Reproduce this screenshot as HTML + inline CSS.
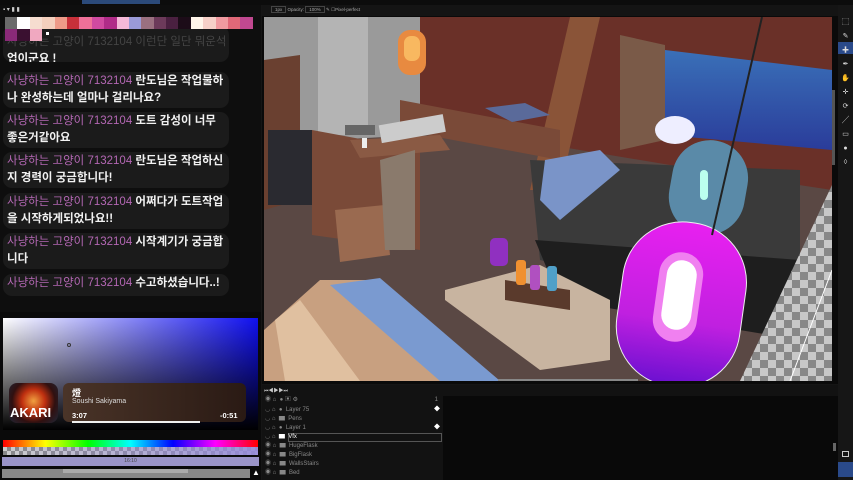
<!DOCTYPE html>
<html><head><meta charset="utf-8"><style>
*{margin:0;padding:0;box-sizing:border-box}
body{width:853px;height:480px;overflow:hidden;background:#151515;position:relative;font-family:"Liberation Sans","Noto Sans CJK KR",sans-serif}
.a{position:absolute}
.bub{position:absolute;left:3px;width:226px;background:#1b1b1b;border-radius:9px;color:#f2f2f2;font-size:11.5px;line-height:16.5px;padding:1px 4px;font-weight:bold}
.bub b{color:#b467b4;font-weight:normal}
.lay{position:absolute;left:262px;width:180px;height:9px;font-size:6px;color:#888;line-height:9px}
.pal{display:flex}.pal i{width:12.4px;height:12px;display:block}
</style></head><body>
<div class="a" style="left:0;top:0;width:853px;height:5px;background:#0c0c0c"></div>
<div class="a" style="left:82px;top:0;width:78px;height:4px;background:#2b4a7a"></div>
<!-- left panel -->
<div class="a" style="left:0;top:5px;width:261px;height:475px;background:#0e0e0e"></div>
<div class="bub" style="top:26px;height:36px;padding-top:8px;overflow:hidden"><div style="color:#444;font-weight:normal;white-space:nowrap;overflow:hidden">사냥하는 고양이 7132104 이런단 일단 뭐운석</div>업이군요 !</div>
<div class="a" style="left:3px;top:6px;font-size:6px;color:#ccc">▪ ▾ ▮ ▮</div>
<div class="a pal" style="left:5px;top:17px">
<i style="background:#6a6a6a"></i><i style="background:#fff"></i><i style="background:#f6ddd0"></i><i style="background:#f4cfbd"></i><i style="background:#ee9a88"></i><i style="background:#c8303a"></i><i style="background:#ee7098"></i><i style="background:#d04aa0"></i><i style="background:#b02c88"></i><i style="background:#f4b8d8"></i><i style="background:#9a9ad8"></i><i style="background:#9a7080"></i><i style="background:#6c3a5a"></i><i style="background:#4a2040"></i><i style="background:#1c0c18"></i><i style="background:#fff5ea"></i><i style="background:#f6d0c8"></i><i style="background:#f09aa0"></i><i style="background:#e06878"></i><i style="background:#c04890"></i></div>
<div class="a pal" style="left:5px;top:29px"><i style="background:#8a2a78"></i><i style="background:#3a1030"></i><i style="background:#f0a8c0"></i><i style="width:3px;height:3px;background:#fff;margin:3px 0 0 4px"></i></div>
<div class="bub" style="top:72px;height:36px"><b>사냥하는 고양이 7132104</b> 란도님은 작업물하나 완성하는데 얼마나 걸리나요?</div>
<div class="bub" style="top:112px;height:36px"><b>사냥하는 고양이 7132104</b> 도트 감성이 너무좋은거같아요</div>
<div class="bub" style="top:152px;height:36px"><b>사냥하는 고양이 7132104</b> 란도님은 작업하신지 경력이 궁금합니다!</div>
<div class="bub" style="top:193px;height:36px"><b>사냥하는 고양이 7132104</b> 어쩌다가 도트작업을 시작하게되었나요!!</div>
<div class="bub" style="top:233px;height:36px"><b>사냥하는 고양이 7132104</b> 시작계기가 궁금합니다</div>
<div class="bub" style="top:274px;height:22px"><b>사냥하는 고양이 7132104</b> 수고하셨습니다..!</div>
<div class="a" style="left:0;top:312px;width:261px;height:168px;background:#0a0a0a"></div>
<div class="a" style="left:3px;top:318px;width:255px;height:112px;background:linear-gradient(to bottom,rgba(0,0,0,0),#000),linear-gradient(to right,#fff,#1010f0)"></div>
<div class="a" style="left:67px;top:343px;width:4px;height:4px;border:1px solid #333;border-radius:50%"></div>
<div class="a" style="left:9px;top:383px;width:49px;height:40px;border-radius:8px;background:radial-gradient(circle at 50% 45%,#f0a040,#c03010 35%,#301010 65%,#202838)"></div>
<div class="a" style="left:10px;top:405px;font-size:13px;color:#fff;font-weight:bold">AKARI</div>
<div class="a" style="left:63px;top:383px;width:183px;height:39px;border-radius:6px;background:linear-gradient(to right,#4a3428,#2a1a14)"></div>
<div class="a" style="left:72px;top:386px;font-size:9px;color:#fff;font-weight:bold">燈</div>
<div class="a" style="left:72px;top:398px;font-size:7px;color:#ddd">Soushi Sakiyama</div>
<div class="a" style="left:72px;top:411px;font-size:7.5px;color:#fff;font-weight:bold">3:07</div>
<div class="a" style="left:220px;top:411px;font-size:7.5px;color:#fff;font-weight:bold">-0:51</div>
<div class="a" style="left:72px;top:421px;width:128px;height:2px;background:#eee"></div>
<div class="a" style="left:3px;top:440px;width:255px;height:7px;background:linear-gradient(to right,red,#ff0,#0f0,#0ff,#00f,#f0f,red)"></div>
<div class="a" style="left:3px;top:447px;width:255px;height:8px;background:repeating-conic-gradient(#888 0 25%,#ccc 0 50%) 0 0/8px 8px"></div>
<div class="a" style="left:3px;top:447px;width:255px;height:8px;background:linear-gradient(to right,rgba(255,255,255,0),rgba(150,140,220,.9))"></div>
<div class="a" style="left:2px;top:457px;width:257px;height:9px;background:#9a94c8;font-size:5px;color:#444;text-align:center;line-height:9px">16:10</div>
<div class="a" style="left:2px;top:469px;width:248px;height:9px;background:#888"></div>
<div class="a" style="left:63px;top:469px;width:125px;height:4px;background:#aaa"></div>
<div class="a" style="left:252px;top:468px;font-size:8px;color:#fff">▲</div>
<!-- options bar -->
<div class="a" style="left:262px;top:5px;width:576px;height:11px;background:#141414"></div>
<div class="a" style="left:271px;top:7px;font-size:4.5px;color:#aaa;white-space:nowrap"><span style="border:1px solid #444;padding:0 3px">1px</span> Opacity: <span style="border:1px solid #444;padding:0 3px">100%</span> ✎ ☐Pixel-perfect</div>
<!-- canvas -->
<svg class="a" style="left:0;top:0" width="853" height="480">
<defs><clipPath id="c"><rect x="264" y="17" width="568" height="364"/></clipPath>
<pattern id="ck" width="16" height="16" patternUnits="userSpaceOnUse"><rect width="16" height="16" fill="#c8c8c8"/><rect width="8" height="8" fill="#888"/><rect x="8" y="8" width="8" height="8" fill="#888"/></pattern>
<linearGradient id="pk" x1="0" y1="0" x2="0" y2="1"><stop offset="0" stop-color="#e820f0"/><stop offset=".6" stop-color="#c020e0"/><stop offset="1" stop-color="#6a10d0"/></linearGradient>
<linearGradient id="sky" x1="0" y1="0" x2="0" y2="1"><stop offset="0" stop-color="#3a70b8"/><stop offset="1" stop-color="#2a3c9a"/></linearGradient></defs>
<rect x="262" y="16" width="576" height="368" fill="#0a0a0a"/>
<g clip-path="url(#c)">
<rect x="264" y="17" width="568" height="364" fill="#5a4844"/>
<polygon points="400,17 832,17 832,190 700,170 400,120" fill="#6a3028"/>
<polygon points="264,17 420,17 420,135 330,140 264,150" fill="#9a9a9a"/>
<rect x="318" y="17" width="50" height="118" fill="#b4b4b4"/>
<polygon points="570,17 600,17 560,190 530,190" fill="#8a5438"/>
<polygon points="665,50 832,70 832,150 665,135" fill="url(#sky)"/>
<polygon points="620,35 665,45 665,140 620,150" fill="#7a5a48"/>
<polygon points="400,100 560,130 560,160 400,130" fill="#7a4a38"/>
<rect x="398" y="30" width="28" height="45" rx="12" fill="#e88a40"/>
<rect x="404" y="36" width="16" height="25" rx="7" fill="#f8b860"/>
<polygon points="264,60 300,55 300,200 264,210" fill="#6a4030"/>
<rect x="268" y="130" width="44" height="75" fill="#2a2a30"/>
<polygon points="312,130 420,150 420,250 312,235" fill="#7a4a38"/>
<polygon points="350,140 440,135 450,150 360,158" fill="#8a5a44"/>
<rect x="380" y="120" width="65" height="18" fill="#ccc" transform="rotate(-10 410 130)"/>
<rect x="345" y="125" width="30" height="10" fill="#666"/>
<rect x="362" y="138" width="5" height="10" fill="#eee"/>
<polygon points="485,108 525,103 550,115 512,122" fill="#5a6a9a"/>
<polygon points="335,210 385,205 390,255 340,262" fill="#9a6a50"/>
<polygon points="380,160 415,150 415,250 385,250" fill="#8a7a6c"/>
<polygon points="530,160 800,170 800,320 540,260" fill="#3a3a3a"/>
<polygon points="535,240 800,260 800,340 560,300" fill="#1e1e1e"/>
<polygon points="545,160 600,150 620,170 560,220 540,200" fill="#7a94c8"/>
<ellipse cx="675" cy="130" rx="20" ry="14" fill="#eef"/>
<polygon points="445,290 540,265 610,300 610,360 540,370 445,300" fill="#c8b4a0"/>
<polygon points="505,280 570,290 570,310 505,300" fill="#5a3a2c"/>
<rect x="516" y="260" width="10" height="25" rx="3" fill="#f09030"/>
<rect x="530" y="265" width="10" height="25" rx="3" fill="#b050c0"/>
<rect x="547" y="266" width="10" height="25" rx="3" fill="#50a0c8"/>
<rect x="490" y="238" width="18" height="28" rx="5" fill="#9030c0"/>
<rect x="670" y="140" width="76" height="95" rx="38" fill="#5a8aa8" transform="rotate(10 708 190)"/>
<rect x="700" y="170" width="8" height="30" rx="4" fill="#bfe"/>
<rect x="620" y="222" width="124" height="165" rx="60" fill="url(#pk)" stroke="#eee" stroke-width="1" transform="rotate(8 682 300)"/>
<rect x="656" y="252" width="44" height="90" rx="22" fill="#f080f0" transform="rotate(8 678 297)"/>
<rect x="664" y="260" width="30" height="70" rx="15" fill="#fff" transform="rotate(8 679 295)"/>
<polygon points="832,185 832,381 740,381" fill="url(#ck)"/>
<line x1="790" y1="381" x2="832" y2="270" stroke="#fff"/>
<line x1="762" y1="17" x2="712" y2="235" stroke="#222" stroke-width="2"/>
<polygon points="264,381 264,330 320,280 380,280 500,381" fill="#c8a080"/>
<polygon points="330,285 380,278 500,381 440,381" fill="#7a9ad0"/>
<polygon points="275,320 300,300 360,381 285,381" fill="#e0c0a0"/>
<rect x="498" y="379" width="140" height="3" fill="#888"/>
</g>
</svg>
<!-- timeline -->
<div class="a" style="left:262px;top:385px;width:576px;height:95px;background:#121212"></div>
<div class="a" style="left:443px;top:396px;width:395px;height:84px;background:#090909"></div>
<div class="a" style="left:264px;top:387px;font-size:5px;color:#ccc">⏮◀▶▶⏭</div>
<div class="lay" style="top:396px"><span style="margin-left:3px">◉ ⌂ &nbsp;● ▣ ⚙</span><span style="position:absolute;right:4px">1</span></div>
<div class="lay" style="top:406px"><span style="margin-left:3px">◡ ⌂ &nbsp;● &nbsp;Layer 75</span><span style="position:absolute;right:2px;color:#fff">◆</span></div>
<div class="lay" style="top:415px"><span style="margin-left:3px">◡ ⌂ &nbsp;▆ &nbsp;Pens</span></div>
<div class="lay" style="top:424px"><span style="margin-left:3px">◡ ⌂ &nbsp;● &nbsp;Layer 1</span><span style="position:absolute;right:2px;color:#fff">◆</span></div>
<div class="lay" style="top:433px;border:1px solid #555;left:288px;width:154px"></div>
<div class="lay" style="top:433px;color:#fff"><span style="margin-left:3px;color:#888">◡ ⌂</span> &nbsp;▆ &nbsp;Vfx</div>
<div class="lay" style="top:442px"><span style="margin-left:3px">◉ ⌂ &nbsp;▆ &nbsp;HugeFlask</span></div>
<div class="lay" style="top:451px"><span style="margin-left:3px">◉ ⌂ &nbsp;▆ &nbsp;BigFlask</span></div>
<div class="lay" style="top:460px"><span style="margin-left:3px">◉ ⌂ &nbsp;▆ &nbsp;WallsStairs</span></div>
<div class="lay" style="top:469px"><span style="margin-left:3px">◉ ⌂ &nbsp;▆ &nbsp;Bed</span></div>
<!-- right toolbar -->
<div class="a" style="left:838px;top:5px;width:15px;height:475px;background:#161616"></div>
<div class="a" style="left:832px;top:90px;width:3px;height:75px;background:#555"></div>
<div class="a" style="left:838px;top:42px;width:15px;height:12px;background:#2a4a8a"></div>
<div class="a" style="left:840px;top:16px;font-size:7px;color:#ddd;line-height:14px;text-align:center;width:11px">⬚<br>✎<br>✚<br>✒<br>✋<br>✛<br>⟳<br>╱<br>▭<br>●<br>◊</div>
<div class="a" style="left:838px;top:462px;width:15px;height:15px;background:#2a4a8a"></div>
<div class="a" style="left:842px;top:451px;width:7px;height:6px;border:1px solid #ccc"></div>
<div class="a" style="left:833px;top:443px;width:3px;height:8px;background:#666"></div>
</body></html>
